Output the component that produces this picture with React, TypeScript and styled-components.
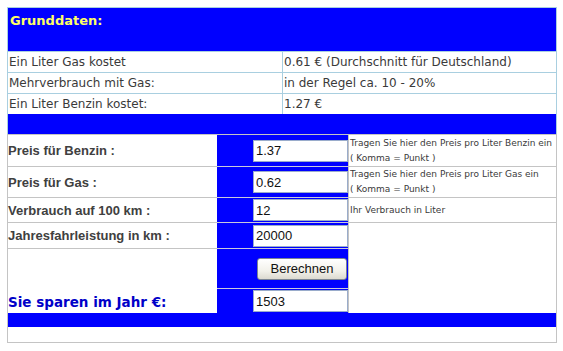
import React from "react";
import styled, { createGlobalStyle } from "styled-components";

const GlobalStyle = createGlobalStyle`
  body {
    margin: 0;
    background: #ffffff;
  }
`;

const Frame = styled.div`
  width: 550px;
  margin: 7px 0 0 7px;
  font-family: "DejaVu Sans", Verdana, sans-serif;
`;

const InfoTable = styled.div`
  border: 1px solid #a9cfe0;
  border-bottom: none;
`;

const Header = styled.div`
  height: 43px;
  box-sizing: border-box;
  padding: 4px 0 0 2px;
  background: #0000ff;
  color: #ffff66;
  font-weight: bold;
  font-size: 13px;
  line-height: 18px;
`;

const InfoRow = styled.div`
  display: grid;
  grid-template-columns: 275px 1fr;
  height: 21px;
  box-sizing: border-box;
  border-top: 1px solid #a9cfe0;
`;

const InfoCell = styled.div<{ $divider?: boolean }>`
  display: flex;
  align-items: center;
  padding-left: 1px;
  font-size: 12px;
  color: #3a3a3a;
  white-space: nowrap;
  border-right: ${(p) => (p.$divider ? "1px solid #a9cfe0" : "none")};
`;

const Band = styled.div<{ $h: number }>`
  height: ${(p) => p.$h}px;
  background: #0000ff;
  grid-column: 1 / -1;
`;

const CalcTable = styled.div`
  display: grid;
  grid-template-columns: 209px 131px 1fr;
  grid-template-rows: 31px 31px 25px 26px 40px 25px 14px 15px;
  border: 1px solid #c4c4c4;
`;

const Label = styled.div<{ $top?: boolean; $span?: number; $result?: boolean }>`
  display: flex;
  align-items: ${(p) => (p.$result ? "flex-end" : "center")};
  padding-bottom: ${(p) => (p.$result ? "3px" : "0")};
  box-sizing: border-box;
  grid-row: span ${(p) => p.$span ?? 1};
  border-top: ${(p) => (p.$top ? "1px solid #c4c4c4" : "none")};
  font-family: ${(p) =>
    p.$result ? '"DejaVu Sans", Verdana, sans-serif' : '"Liberation Sans", Arial, sans-serif'};
  font-weight: bold;
  font-size: ${(p) => (p.$result ? "13.5px" : "13px")};
  color: ${(p) => (p.$result ? "#0000c8" : "#404040")};
  white-space: nowrap;
`;

const BlueCell = styled.div<{ $top?: boolean }>`
  display: flex;
  align-items: center;
  justify-content: flex-end;
  box-sizing: border-box;
  background: #0000ff;
  border-top: ${(p) => (p.$top ? "1px solid #c8c8dc" : "none")};
`;

const Desc = styled.div<{ $top?: boolean; $span?: number }>`
  display: flex;
  flex-direction: column;
  justify-content: center;
  box-sizing: border-box;
  grid-row: span ${(p) => p.$span ?? 1};
  padding-left: 1px;
  border-top: ${(p) => (p.$top ? "1px solid #c4c4c4" : "none")};
  border-left: 1px solid #c4c4c4;
  font-size: 9px;
  line-height: 15px;
  color: #3a3a3a;
  white-space: nowrap;
`;

const Input = styled.input`
  width: 95px;
  height: 22px;
  box-sizing: border-box;
  margin: 0;
  padding: 0 2px;
  border: 1px solid #9aaccb;
  background: #ffffff;
  font-family: "Liberation Sans", Arial, sans-serif;
  font-size: 13px;
  color: #111111;
  outline: none;
`;

const Button = styled.button`
  width: 90px;
  height: 22px;
  margin-right: 1px;
  padding: 0;
  border: 1px solid #7a8494;
  border-radius: 3px;
  background: linear-gradient(#ffffff, #f2f1ea 60%, #dcdad0);
  font-family: "Liberation Sans", Arial, sans-serif;
  font-size: 13px;
  color: #111111;
  cursor: pointer;
`;

const Empty = styled.div`
  grid-column: 1 / -1;
`;

export default function App() {
  return (
    <>
      <GlobalStyle />
      <Frame>
        <InfoTable>
          <Header>Grunddaten:</Header>
          <InfoRow>
            <InfoCell $divider>Ein Liter Gas kostet</InfoCell>
            <InfoCell>0.61 € (Durchschnitt für Deutschland)</InfoCell>
          </InfoRow>
          <InfoRow>
            <InfoCell $divider>Mehrverbrauch mit Gas:</InfoCell>
            <InfoCell>in der Regel ca. 10 - 20%</InfoCell>
          </InfoRow>
          <InfoRow>
            <InfoCell $divider>Ein Liter Benzin kostet:</InfoCell>
            <InfoCell>1.27 €</InfoCell>
          </InfoRow>
          <Band $h={20} />
        </InfoTable>
        <CalcTable>
          <Label>Preis für Benzin :</Label>
          <BlueCell>
            <Input defaultValue="1.37" />
          </BlueCell>
          <Desc>
            <span>Tragen Sie hier den Preis pro Liter Benzin ein</span>
            <span>( Komma = Punkt )</span>
          </Desc>

          <Label $top>Preis für Gas :</Label>
          <BlueCell $top>
            <Input defaultValue="0.62" />
          </BlueCell>
          <Desc $top>
            <span>Tragen Sie hier den Preis pro Liter Gas ein</span>
            <span>( Komma = Punkt )</span>
          </Desc>

          <Label $top>Verbrauch auf 100 km :</Label>
          <BlueCell $top>
            <Input defaultValue="12" />
          </BlueCell>
          <Desc $top>Ihr Verbrauch in Liter</Desc>

          <Label $top>Jahresfahrleistung in km :</Label>
          <BlueCell $top>
            <Input defaultValue="20000" />
          </BlueCell>
          <Desc $top $span={3} />

          <Label $top $span={2} $result>
            Sie sparen im Jahr €:
          </Label>
          <BlueCell $top>
            <Button type="button">Berechnen</Button>
          </BlueCell>
          <BlueCell $top>
            <Input defaultValue="1503" />
          </BlueCell>

          <Band $h={14} />
          <Empty />
        </CalcTable>
      </Frame>
    </>
  );
}
